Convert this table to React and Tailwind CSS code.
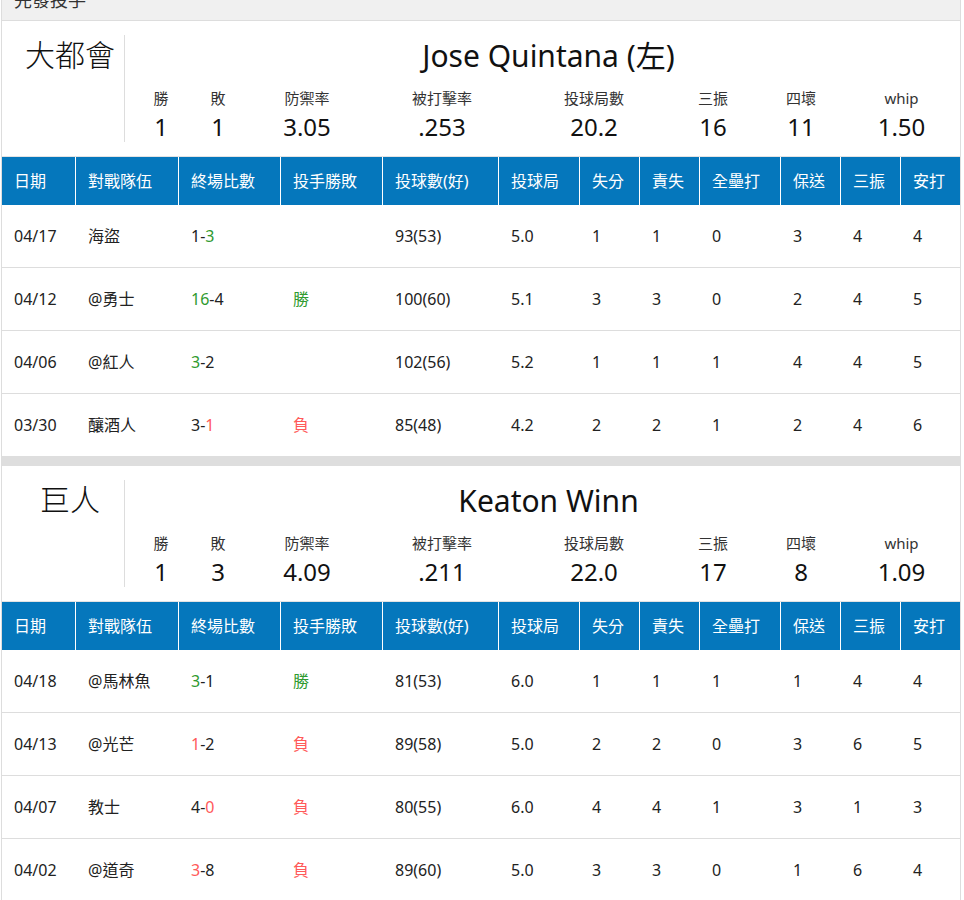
import React from 'react';

const COLS = ['日期', '對戰隊伍', '終場比數', '投手勝敗', '投球數(好)', '投球局', '失分', '責失', '全壘打', '保送', '三振', '安打'];

const STAT_LABELS = ['勝', '敗', '防禦率', '被打擊率', '投球局數', '三振', '四壞', 'whip'];

const pitchers = [
  {
    team: '大都會',
    name: 'Jose Quintana (左)',
    stats: ['1', '1', '3.05', '.253', '20.2', '16', '11', '1.50'],
    games: [
      { date: '04/17', opp: '海盜', score: ['1', '3'], hl: 1, hc: 'g', res: '', pitches: '93(53)', rest: ['5.0', '1', '1', '0', '3', '4', '4'] },
      { date: '04/12', opp: '@勇士', score: ['16', '4'], hl: 0, hc: 'g', res: '勝', pitches: '100(60)', rest: ['5.1', '3', '3', '0', '2', '4', '5'] },
      { date: '04/06', opp: '@紅人', score: ['3', '2'], hl: 0, hc: 'g', res: '', pitches: '102(56)', rest: ['5.2', '1', '1', '1', '4', '4', '5'] },
      { date: '03/30', opp: '釀酒人', score: ['3', '1'], hl: 1, hc: 'r', res: '負', pitches: '85(48)', rest: ['4.2', '2', '2', '1', '2', '4', '6'] },
    ],
  },
  {
    team: '巨人',
    name: 'Keaton Winn',
    stats: ['1', '3', '4.09', '.211', '22.0', '17', '8', '1.09'],
    games: [
      { date: '04/18', opp: '@馬林魚', score: ['3', '1'], hl: 0, hc: 'g', res: '勝', pitches: '81(53)', rest: ['6.0', '1', '1', '1', '1', '4', '4'] },
      { date: '04/13', opp: '@光芒', score: ['1', '2'], hl: 0, hc: 'r', res: '負', pitches: '89(58)', rest: ['5.0', '2', '2', '0', '3', '6', '5'] },
      { date: '04/07', opp: '教士', score: ['4', '0'], hl: 1, hc: 'r', res: '負', pitches: '80(55)', rest: ['6.0', '4', '4', '1', '3', '1', '3'] },
      { date: '04/02', opp: '@道奇', score: ['3', '8'], hl: 0, hc: 'r', res: '負', pitches: '89(60)', rest: ['5.0', '3', '3', '0', '1', '6', '4'] },
    ],
  },
];

const GRID = 'grid grid-cols-[73px_103px_102px_102px_116px_81px_60px_60px_81px_60px_60px_1fr]';

const hlColor = (c) => (c === 'g' ? 'text-[#2f9a2f]' : 'text-[#ff5a5a]');

const Score = ({ score, hl, hc }) => (
  <span>
    <span className={hl === 0 ? hlColor(hc) : ''}>{score[0]}</span>
    -
    <span className={hl === 1 ? hlColor(hc) : ''}>{score[1]}</span>
  </span>
);

const PitcherBlock = ({ p }) => {
  return (
    <div>
      <div className="flex pt-[14px] pb-[14px] border-b border-[#e3e3e3]">
        <div className="w-[123px] h-[107px] border-r border-[#dddddd] pl-[14px] text-center text-[30px] leading-[40px] font-light text-[#111]">
          {p.team}
        </div>
        <div className="flex-1 pl-[12px]">
          <div className="text-center text-[30px] leading-[42px] text-[#111]">{p.name}</div>
          <div className="grid grid-cols-[48px_66px_112px_158px_146px_92px_84px_1fr] text-center mt-[10px]">
            {STAT_LABELS.map((l) => (
              <div key={l} className="text-[15px] leading-[22px] text-[#333]">{l}</div>
            ))}
          </div>
          <div className="grid grid-cols-[48px_66px_112px_158px_146px_92px_84px_1fr] text-center mt-[3px]">
            {p.stats.map((s, i) => (
              <div key={i} className="text-[24px] leading-[30px] text-[#111]">{s}</div>
            ))}
          </div>
        </div>
      </div>

      <div className={`${GRID} bg-[#0577bc] text-white text-[16px]`}>
        {COLS.map((c, i) => (
          <div
            key={c}
            className={`h-[48px] flex items-center pl-[12px] ${i > 0 ? 'border-l border-white' : ''}`}
          >
            {c}
          </div>
        ))}
      </div>

      {p.games.map((g, ri) => {
        const cells = [
          g.date,
          g.opp,
          <Score score={g.score} hl={g.hl} hc={g.hc} />,
          g.res ? <span className={g.res === '勝' ? 'text-[#2f9a2f]' : 'text-[#ff5a5a]'}>{g.res}</span> : '',
          g.pitches,
          ...g.rest,
        ];
        return (
          <div
            key={g.date}
            className={`${GRID} text-[16px] text-[#222] ${ri < p.games.length - 1 ? 'border-b border-[#dddddd]' : ''}`}
          >
            {cells.map((c, i) => (
              <div
                key={i}
                className={`h-[62px] flex items-center pl-[12px] ${i > 0 ? 'border-l border-transparent' : ''}`}
              >
                {c}
              </div>
            ))}
          </div>
        );
      })}
    </div>
  );
};

export default function App() {
  return (
    <div
      className="w-[960px] ml-px bg-white border-x border-[#dddddd]"
      style={{ fontFamily: '"Noto Sans", "Noto Sans CJK TC", sans-serif' }}
    >
      <div className="h-[20px] overflow-hidden bg-[#f0f0f0] border-b border-[#dddddd] box-content">
        <div className="-mt-[12px] pl-[12px] text-[18px] leading-[24px] text-[#333]">先發投手</div>
      </div>
      <PitcherBlock p={pitchers[0]} />
      <div className="h-[10px] bg-[#dedede]" />
      <PitcherBlock p={pitchers[1]} />
    </div>
  );
}
